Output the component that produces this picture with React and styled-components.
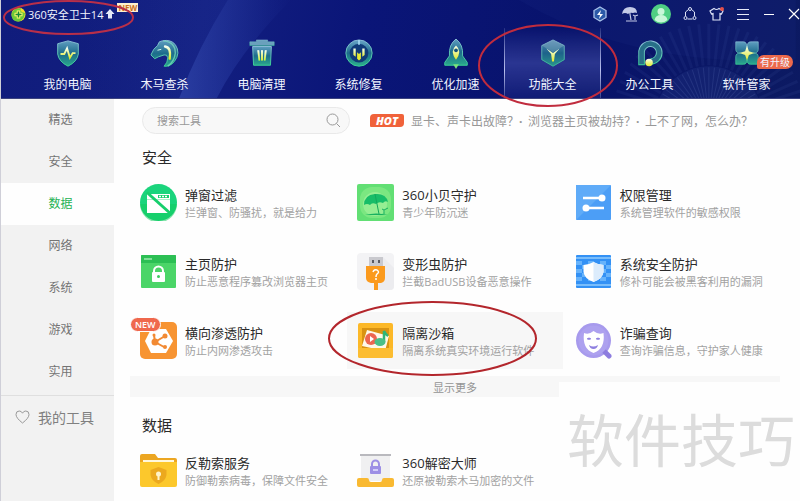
import React from "react";
import styled, { createGlobalStyle, css } from "styled-components";

const GlobalStyle = createGlobalStyle`
  * {
    box-sizing: border-box;
  }
  body {
    margin: 0;
    background: #fefefe;
    font-family: "Open Sans", "Noto Sans CJK SC", sans-serif;
    font-size: 12px;
  }
  button {
    padding: 0;
    border: none;
    background: none;
    font: inherit;
    color: inherit;
    cursor: pointer;
  }
  a {
    color: inherit;
    text-decoration: none;
  }
  svg {
    display: block;
  }
`;

const Page = styled.div`
  position: relative;
  display: flex;
  flex-direction: column;
  min-height: 100vh;
  border-left: 1px solid #cfcfd8;
  overflow: hidden;
`;

const Header = styled.header`
  position: relative;
  background: linear-gradient(100deg, #101c7c 0%, #131f80 25%, #0a1578 45%, #08136c 70%, #0c1a62 100%);
  color: #f2f5ff;
  border-bottom: 1px solid #3c437f;
`;

const Backdrop = styled.svg`
  position: absolute;
  top: 0;
  right: 0;
  height: 100%;
`;

const TitleBar = styled.div`
  position: relative;
  display: flex;
  align-items: center;
  justify-content: space-between;
  height: 28px;
  padding-left: 10px;
`;

const Brand = styled.div`
  display: flex;
  align-items: center;
  gap: 2px;
  height: 28px;
  font-size: 11px;
`;

const BrandTag = styled.span`
  align-self: flex-start;
  margin-top: 3px;
  padding: 0 1px;
  background: #fdf1cf;
  color: #c9701f;
  font-size: 8px;
  font-weight: 700;
  line-height: 9px;
`;

const WindowTools = styled.div`
  display: flex;
  align-items: center;
  gap: 12px;
`;

const Nav = styled.nav`
  position: relative;
  display: flex;
  padding: 0 5px 0 18px;
`;

const Tab = styled.button`
  position: relative;
  flex: 1;
  display: flex;
  flex-direction: column;
  align-items: center;
  gap: 6px;
  height: 70px;
  padding-top: 10px;
  line-height: 18px;
  white-space: nowrap;
  border: 1px solid transparent;
  border-width: 0 1px;
  ${props =>
    props.$active &&
    css`
      background: linear-gradient(rgba(150, 160, 255, 0), rgba(150, 160, 255, 0.24) 50%, rgba(150, 160, 255, 0.06));
      border-image: linear-gradient(rgba(255, 255, 255, 0.1), #b9c0ee 60%, rgba(255, 255, 255, 0.15)) 1;
      border-width: 0 1px;
    `}
`;

const TabBadge = styled.span`
  position: absolute;
  top: 27px;
  right: 1px;
  padding: 0 3px;
  border-radius: 7px 7px 7px 2px;
  background: #ec694c;
  font-size: 10px;
  line-height: 14px;
`;

const Body = styled.div`
  flex: 1;
  display: flex;
`;

const Sidebar = styled.aside`
  flex: 0 0 113px;
  background: #f2f2f2;
  color: #666;
`;

const Category = styled.button`
  display: block;
  width: 100%;
  height: 42px;
  padding: 0 8px 2px 14px;
  background: ${props => (props.$active ? "#fefefe" : "transparent")};
  color: ${props => (props.$active ? "#1fb254" : "#747474")};
`;

const MyTools = styled.button`
  display: flex;
  align-items: center;
  gap: 8px;
  width: 100%;
  height: 42px;
  margin-top: 2px;
  padding-left: 14px;
  border-top: 1px solid #dfdfdf;
  font-size: 14px;
  color: #808080;
`;

const Main = styled.main`
  flex: 1;
  min-width: 0;
  padding: 8px 20px 0 16px;
`;

const Toolbar = styled.div`
  display: flex;
  align-items: center;
  padding-left: 12px;
`;

const Search = styled.label`
  display: flex;
  align-items: center;
  flex: 0 0 208px;
  height: 27px;
  padding: 0 8px 0 14px;
  border: 1px solid #e9e9e9;
  border-radius: 14px;
  background: #f8f8f8;
`;

const SearchInput = styled.input`
  flex: 1;
  min-width: 0;
  padding: 0;
  border: none;
  outline: none;
  background: none;
  font-family: inherit;
  font-size: 11px;
  &::placeholder {
    color: #999;
    opacity: 1;
  }
`;

const Hot = styled.span`
  width: 34px;
  margin: 0 7px 0 20px;
  border-radius: 4px 2px 4px 1px;
  background: #f0623a;
  color: #fff;
  font-size: 11px;
  font-style: italic;
  font-weight: 800;
  line-height: 13px;
  text-align: center;
`;

const HotLink = styled.a`
  color: #979797;
  white-space: nowrap;
  & + &::before {
    content: "·";
    display: inline-block;
    width: 9px;
    font-weight: 700;
  }
`;

const Heading = styled.h2`
  margin: ${props => (props.$spaced ? "18px" : "13px")} 0 7px 12px;
  font-size: 15px;
  font-weight: 400;
  line-height: 20px;
  color: #2a2a2a;
`;

const ToolGrid = styled.div`
  display: grid;
  grid-template-columns: repeat(3, 1fr);
  gap: 12px 2px;
`;

const ToolButton = styled.button`
  display: flex;
  align-items: center;
  gap: 8px;
  min-width: 0;
  height: 57px;
  padding-left: 10px;
  text-align: left;
  background: ${props => (props.$hovered ? "#f7f7f7" : "transparent")};
`;

const ToolIcon = styled.span`
  position: relative;
  flex: 0 0 37px;
`;

const NewBadge = styled.span`
  position: absolute;
  top: -5px;
  left: -10px;
  padding: 0 4px;
  border: 1px solid #fff;
  border-radius: 8px;
  background: #ef684d;
  color: #fff;
  font-size: 9px;
  font-weight: 600;
  line-height: 13px;
`;

const ToolText = styled.span`
  padding-top: 2px;
  line-height: 18px;
  white-space: nowrap;
`;

const ToolName = styled.span`
  display: block;
  font-size: 13px;
  color: #2a2a2a;
`;

const ToolDesc = styled.span`
  display: block;
  font-size: 11px;
  color: #a2a2a2;
`;

const More = styled.button`
  display: block;
  width: 100%;
  height: 21px;
  margin-top: 7px;
  background: #f7f7f7;
  font-size: 11px;
  color: #949494;
`;

const Watermark = styled.div`
  position: absolute;
  top: 382px;
  right: 0;
  padding: 30px 5px 20px 8px;
  background: #fefefe;
  color: #dcdcdc;
  font-size: 57px;
  line-height: 57px;
  pointer-events: none;
`;

const Ring = styled.svg`
  position: absolute;
  top: ${props => props.$top}px;
  left: ${props => props.$left}px;
  fill: none;
  stroke: ${props => props.$color};
  stroke-width: 2;
  pointer-events: none;
`;

const Circled = ({ left, top, width, height, color = "#b3262c" }) => (
  <Ring $left={left} $top={top} $color={color} width={width} height={height} aria-hidden="true">
    <ellipse cx={width / 2} cy={height / 2} rx={width / 2 - 1} ry={height / 2 - 1} />
  </Ring>
);

// diagonal sheen and the fan in the right corner
const fanAngles = Array.from({ length: 31 }, (_, i) => -180 + i * 6);

const HeaderArt = () => (
  <Backdrop width="800" height="99" viewBox="0 0 800 99" aria-hidden="true">
    <defs>
      <linearGradient id="sheen" x1="0" x2="1">
        <stop offset="0" stopColor="#3a58c8" stopOpacity="0" />
        <stop offset="1" stopColor="#3a58c8" stopOpacity="0.12" />
      </linearGradient>
      <linearGradient id="ray" x1="0" x2="1">
        <stop offset="0" stopColor="#4a68d0" stopOpacity="0.4" />
        <stop offset="1" stopColor="#3a58c8" stopOpacity="0" />
      </linearGradient>
    </defs>
    <path d="M80 0H226Q196 48 177 99H80z" fill="url(#sheen)" />
    <path d="M226 0H290Q240 50 215 99H177Q196 48 226 0z" fill="url(#ray)" />
    <path d="M520 0H800V60Q640 70 520 0z" fill="#1b2f86" opacity="0.18" />
    <g fill="none" stroke="#5069b8" opacity="0.1">
      {fanAngles.map(a => (
        <path key={a} d="M56 0H98" strokeWidth="3" transform={`translate(712 122) rotate(${a})`} />
      ))}
    </g>
    <circle cx="712" cy="122" r="55" fill="#4a62b2" opacity="0.14" />
    <g fill="none" stroke="#7a90d4" opacity="0.16">
      {fanAngles.map(a => (
        <path key={a} d="M20 0H54" strokeWidth="1" transform={`translate(712 122) rotate(${a})`} />
      ))}
    </g>
  </Backdrop>
);

const NavDefs = () => (
  <Backdrop width="0" aria-hidden="true">
    <defs>
      <linearGradient id="glass" x1="0" y1="0" x2="0" y2="1">
        <stop offset="0" stopColor="#5f9dc0" />
        <stop offset="0.5" stopColor="#1d6c8c" />
        <stop offset="1" stopColor="#2aa88c" />
      </linearGradient>
      <linearGradient id="edge" x1="0" y1="0" x2="0" y2="1">
        <stop offset="0" stopColor="#8cc0d8" />
        <stop offset="1" stopColor="#38d494" />
      </linearGradient>
      <linearGradient id="glow" x1="0" y1="0" x2="0" y2="1">
        <stop offset="0" stopColor="#f4fff0" />
        <stop offset="1" stopColor="#e2ea2c" />
      </linearGradient>
    </defs>
  </Backdrop>
);

const navIcons = {
  computer: (
    <>
      <path d="M16 3 27 6V17Q26 25 16 30 6 25 5 17V6z" fill="url(#glass)" stroke="url(#edge)" />
      <path d="M8 17h4l3-6 3 10 3-5h3" fill="none" stroke="url(#glow)" strokeWidth="2" />
    </>
  ),
  horse: (
    <>
      <path
        d="M13 3Q22 1 27 7q6 9-1 18-5 6-11 5 4-4 4-9-1-4-4-3l-6 2-4 2-4-4 3-6 4-4 2-4z"
        fill="url(#glass)"
        stroke="url(#edge)"
      />
      <path d="M14 3q13 1 13 13-1 9-8 14" fill="none" stroke="#7fe3c0" strokeWidth="1.500" opacity="0.7" />
      <path d="M16 9q7 1 5 13" fill="none" stroke="url(#glow)" strokeWidth="2.500" strokeLinecap="round" />
      <path d="M8 13l4-1" stroke="#d8fff0" />
    </>
  ),
  clean: (
    <>
      <path d="M3 4h7V2h12v2h7v4H3z" fill="#6aa0bd" stroke="url(#edge)" strokeWidth="0.5" />
      <path d="M6 9h20l-1 20H7z" fill="url(#glass)" stroke="url(#edge)" />
      <path d="M12 13l1 11M16 13v11M20 13l-1 11" stroke="url(#edge)" strokeWidth="2" />
      <path d="M11 13h2l1 11h-1.500zM15 13h2v11h-2zM19 13h2l-1.500 11H18z" fill="url(#glow)" />
    </>
  ),
  repair: (
    <>
      <circle cx="16" cy="16" r="12" fill="#103b78" stroke="url(#glass)" strokeWidth="4" />
      <circle cx="16" cy="16" r="14" fill="none" stroke="url(#edge)" />
      <path d="M16 2v5" stroke="#9dd2ec" strokeWidth="2" />
      <path d="M10 11h2.500v9L10 18zM19.500 11H22v7l-2.500 2z" fill="url(#glow)" />
      <path d="M14 15l2 2 2-2v7l-2 2-2-2z" fill="#e6ec34" />
    </>
  ),
  rocket: (
    <>
      <path d="M16 1Q24 7 23 19l5 7v3H4v-3l5-7Q8 7 16 1z" fill="url(#glass)" stroke="url(#edge)" />
      <path d="M16 8q7 6 0 15-7-9 0-15z" fill="url(#glow)" />
      <circle cx="16" cy="13" r="2" fill="#14527a" />
      <path d="M13 28h6l-3 5z" fill="#7be27a" />
    </>
  ),
  cube: (
    <>
      <path d="M16 2 28 8V23L16 30 4 23V8z" fill="url(#glass)" stroke="url(#edge)" opacity="0.85" />
      <path d="M16 2 28 8 16 15 4 8z" fill="#9dbccc" opacity="0.35" />
      <path d="M9 11l7 5 7-5-5 6-1 8h-2l-1-8z" fill="url(#glow)" />
    </>
  ),
  office: (
    <>
      <path d="M7 29V14a9.500 9.500 0 1 1 9.500 11" fill="none" stroke="url(#edge)" strokeWidth="7" />
      <path d="M7 28V14a9.500 9.500 0 1 1 9.500 11" fill="none" stroke="#286f88" strokeWidth="5" />
      <circle cx="15" cy="26" r="4" fill="url(#glow)" />
    </>
  ),
  manager: (
    <>
      <path
        d="M4 4h8q4 0 4 6 0-6 4-6h8v8q0 4-5 4 5 0 5 4v8h-8q-4 0-4-5 0 5-4 5H4v-8q0-4 5-4-5 0-5-4z"
        fill="url(#glass)"
        stroke="url(#edge)"
        strokeWidth="0.7"
      />
      <path d="M16 8l2 6 6 2-6 2-2 6-2-6-6-2 6-2z" fill="url(#glow)" />
    </>
  )
};

const tabs = [
  { id: "computer", label: "我的电脑" },
  { id: "horse", label: "木马查杀" },
  { id: "clean", label: "电脑清理" },
  { id: "repair", label: "系统修复" },
  { id: "rocket", label: "优化加速" },
  { id: "cube", label: "功能大全" },
  { id: "office", label: "办公工具" },
  { id: "manager", label: "软件管家", badge: "有升级" }
];

const toolIcons = {
  popup: (
    <>
      <circle cx="18.5" cy="18.5" r="18.5" fill="#1ad47c" />
      <path d="M0 20a18.500 18.500 0 0 0 37 0z" fill="#12ca5c" opacity="0.5" />
      <path d="M7 10h23v19H7z" fill="#fff" />
      <path d="M18 11h11v3H18z" fill="#17cf6c" />
      <path d="M19 12.500h9" stroke="#fff" strokeWidth="1.500" strokeDasharray="2 1" />
      <path d="M7 15.500h23" stroke="#a9efc8" />
      <path d="M7 8.500L31 30" stroke="#17cf6c" strokeWidth="3" />
    </>
  ),
  umbrella: (
    <>
      <rect width="37" height="37" rx="2" fill="#62df74" />
      <rect x="3" y="3" width="31" height="31" rx="12" fill="#86ea88" opacity="0.7" />
      <circle cx="18" cy="20" r="12" fill="#a8f4a0" opacity="0.6" />
      <path d="M7 21Q7 11 18 10q11-1 13 8-3-2-5 1-4-2-7 1-4-2-6 1-3-2-6 0z" fill="#18bd68" />
      <path d="M18 10l4 20" stroke="#13a85b" />
      <path d="M8 31q11-3 23 0z" fill="#18b160" />
      <path d="M27 30v-4l-2-1m2 1 4-2" fill="none" stroke="#18b160" />
    </>
  ),
  sliders: (
    <>
      <rect x="1" y="1" width="35" height="35" rx="1" fill="#4c9ef6" />
      <path d="M1 1h35L1 36z" fill="#5fabf8" />
      <path d="M8 14h18M12 24h17" stroke="#fff" strokeWidth="2.500" />
      <circle cx="27" cy="14" r="3.500" fill="#fff" />
      <circle cx="11" cy="24" r="3.500" fill="#fff" />
    </>
  ),
  homepage: (
    <>
      <rect x="1" y="2" width="35" height="33" rx="1" fill="#4bd568" />
      <path d="M1 3q0-1 1-1h33q1 0 1 1v7H1z" fill="#2cbf54" />
      <path d="M4 6h8" stroke="#d4ffdc" />
      <path d="M14 19v-1a4.500 4.500 0 0 1 9 0v3" fill="none" stroke="#fff" strokeWidth="2" />
      <rect x="12" y="19" width="13" height="10" rx="1" fill="#fff" />
      <circle cx="18.500" cy="23.500" r="1.500" fill="#3cca5e" />
    </>
  ),
  usb: (
    <>
      <rect width="37" height="37" rx="4" fill="#f3f3f5" />
      <path d="M26 4l11 11v18q0 4-4 4H20z" fill="#ececef" />
      <path d="M12 4h14v10H12z" fill="#c9c9ce" />
      <path d="M15 7h2v3h-2zM21 7h2v3h-2z" fill="#5a5a62" />
      <path d="M9 13h19v12q0 4-4 5h-3v7h-4v-7h-3q-5-1-5-5z" fill="#fb9a1d" />
      <path d="M16 19q1-3 4-2 3 2 0 4-1 1-1 3M18 26h2" fill="none" stroke="#fff" strokeWidth="1.500" />
    </>
  ),
  guard: (
    <>
      <rect x="1" y="2" width="35" height="33" rx="1" fill="#3391f5" />
      <path d="M1 5h35M1 32h35" stroke="#79bdfb" strokeWidth="2" />
      <path
        d="M1 10h35M7 14h29M1 18h35M7 22h29M1 26h35"
        stroke="#67b3fb"
        strokeWidth="4"
        strokeDasharray="6 6"
      />
      <path d="M18.500 9q5 3 10 3v7q-1 7-10 10-9-3-10-10v-7q5 0 10-3z" fill="#fff" />
      <path d="M18.500 9q5 3 10 3v7q-1 7-10 10z" fill="#dcecfc" />
    </>
  ),
  lateral: (
    <>
      <rect width="37" height="37" rx="5" fill="#f79432" />
      <path d="M11 7h15l7 12-7 12H11L5 19z" fill="#fff" />
      <path d="M15 20l10-6M15 20l9 5M15 20l-1-7" stroke="#f28a33" strokeWidth="2" />
      <circle cx="15" cy="20" r="3.500" fill="#f28a33" />
      <circle cx="25" cy="14" r="2.500" fill="#f28a33" />
      <circle cx="25" cy="25" r="2" fill="#f28a33" />
      <circle cx="14" cy="13" r="1.500" fill="#f28a33" />
    </>
  ),
  sandbox: (
    <>
      <rect x="1" y="1" width="35" height="35" rx="2" fill="#fcb827" />
      <path d="M5 6h27v20H5z" fill="#d99312" />
      <path d="M10 8l22 6-4 15-23-5z" fill="#fff8e8" />
      <circle cx="14" cy="17" r="6" fill="#ed6650" />
      <path d="M13 14l4 3-4 3z" fill="#fff" />
      <path d="M27 20V9q2 4 4 5" fill="none" stroke="#2fb578" strokeWidth="2.500" />
      <ellipse cx="23" cy="20" rx="5.500" ry="4" fill="#4bbf87" />
      <path d="M1 26h35v8q0 2-2 2H3q-2 0-2-2z" fill="#fcbd31" />
    </>
  ),
  fraud: (
    <>
      <circle cx="18.500" cy="18.500" r="17.500" fill="#a79aed" />
      <path d="M30 30l4 4" stroke="#8d7cdf" strokeWidth="5" strokeLinecap="round" />
      <circle cx="18.500" cy="18.500" r="15" fill="#ada1ef" />
      <path d="M9 11q5 2 9.500-2 5 4 10 2 2 16-10 20Q7 27 9 11z" fill="#fff" />
      <path d="M12 17q2-2 4 0l-2 1zM21 17q2-2 4 0l-2 1zM14 23q4 3 9 0-1 4-4.500 4T14 23z" fill="#8e7fe0" />
      <path d="M12 17q2-2 4 0M21 17q2-2 4 0" fill="none" stroke="#8e7fe0" />
    </>
  ),
  folder: (
    <>
      <path d="M0 4q0-2 2-2h13l3 4h17q2 0 2 2v8H0z" fill="#eca622" />
      <path d="M3 8h31v4H3z" fill="#fff8dc" />
      <path d="M0 10h37v23q0 2-2 2H2q-2 0-2-2z" fill="#fcc82c" />
      <path d="M18.500 15l8 3v5q-1 6-8 9-7-3-8-9v-5z" fill="#eca91e" />
      <circle cx="18.500" cy="22" r="2.500" fill="#fff3c8" />
      <path d="M18.500 22v6" stroke="#fff3c8" strokeWidth="2" />
    </>
  ),
  decrypt: (
    <>
      <path d="M4 2h29v27H4z" fill="#f0f0f1" />
      <path d="M3 2h31v2H3z" fill="#b9b9be" />
      <path d="M15 15v-3a3.500 3.500 0 0 1 7 0v4" fill="none" stroke="#9d8fe5" strokeWidth="2" />
      <rect x="13" y="14" width="11" height="8" rx="1" fill="#9d8fe5" />
      <path d="M16 18h5" stroke="#e5e0ff" strokeWidth="1.500" />
      <path d="M2 26h8q2 0 2 2 0 2 2 2h9q2 0 2-2 0-2 2-2h8q2 0 2 2v5q0 2-2 2H2q-2 0-2-2v-5q0-2 2-2z" fill="#f9b931" />
    </>
  )
};

const safetyTools = [
  { id: "popup", name: "弹窗过滤", desc: "拦弹窗、防骚扰，就是给力" },
  { id: "umbrella", name: "360小贝守护", desc: "青少年防沉迷" },
  { id: "sliders", name: "权限管理", desc: "系统管理软件的敏感权限" },
  { id: "homepage", name: "主页防护", desc: "防止恶意程序篡改浏览器主页" },
  { id: "usb", name: "变形虫防护", desc: "拦截BadUSB设备恶意操作" },
  { id: "guard", name: "系统安全防护", desc: "修补可能会被黑客利用的漏洞" },
  { id: "lateral", name: "横向渗透防护", desc: "防止内网渗透攻击", isNew: true },
  { id: "sandbox", name: "隔离沙箱", desc: "隔离系统真实环境运行软件", hovered: true },
  { id: "fraud", name: "诈骗查询", desc: "查询诈骗信息，守护家人健康" }
];

const dataTools = [
  { id: "folder", name: "反勒索服务", desc: "防御勒索病毒，保障文件安全" },
  { id: "decrypt", name: "360解密大师", desc: "还原被勒索木马加密的文件" }
];

const categories = ["精选", "安全", "数据", "网络", "系统", "游戏", "实用"];

const hotLinks = ["显卡、声卡出故障？", "浏览器主页被劫持？", "上不了网，怎么办？"];

const Tools = ({ items }) => (
  <ToolGrid>
    {items.map(tool => (
      <ToolButton key={tool.id} $hovered={tool.hovered}>
        <ToolIcon>
          <svg width="37" height="37" viewBox="0 0 37 37" aria-hidden="true">
            {toolIcons[tool.id]}
          </svg>
          {tool.isNew && <NewBadge>NEW</NewBadge>}
        </ToolIcon>
        <ToolText>
          <ToolName>{tool.name}</ToolName>
          <ToolDesc>{tool.desc}</ToolDesc>
        </ToolText>
      </ToolButton>
    ))}
  </ToolGrid>
);

const WindowButtons = () => (
  <WindowTools>
    <button aria-label="加速">
      <svg width="18" height="18" viewBox="0 0 18 18">
        <path d="M9 2l6 3.500v7L9 16l-6-3.500v-7z" fill="#2c5aa8" stroke="#a9c2ea" strokeWidth="1.300" />
        <path d="M10 5L6 10h3l-1 4 4-5H9z" fill="#fff" />
      </svg>
    </button>
    <button aria-label="守护">
      <svg width="18" height="18" viewBox="0 0 18 18">
        <path d="M1 9Q2 2 9 2t7 6q-2-1-4 0-3-1-5 1-3-2-6 0z" fill="#c3cae6" />
        <path d="M8 3l2 12M5 16h11M14 15v-4l-2-1m2 1 3-1" fill="none" stroke="#c3cae6" strokeWidth="1.200" />
      </svg>
    </button>
    <button aria-label="账号">
      <svg width="20" height="20" viewBox="0 0 20 20">
        <circle cx="10" cy="10" r="10" fill="#4fcf83" />
        <circle cx="10" cy="7.500" r="3.500" fill="#c9f7d8" />
        <path d="M3.500 16q1-5 6.500-5t6.500 5Q10 21 3.500 16z" fill="#c9f7d8" />
      </svg>
    </button>
    <button aria-label="分享">
      <svg width="14" height="14" viewBox="0 0 14 14" fill="none" stroke="#dde3f7">
        <path d="M5.500 2.500 2.500 5v4M8.500 2.500l3 2.500v4M9.500 12h-5" />
        <circle cx="7" cy="2" r="1.500" />
        <circle cx="2.500" cy="11" r="1.500" />
        <circle cx="11.500" cy="11" r="1.500" />
      </svg>
    </button>
    <button aria-label="皮肤">
      <svg width="15" height="14" viewBox="0 0 15 14">
        <path
          d="M5 1.500q2.500 2 5 0L14 4l-1.500 3-1.500-.5V13H4V6.500L2.500 7 1 4z"
          fill="none"
          stroke="#dde3f7"
          strokeWidth="1.200"
        />
        <circle cx="13" cy="2" r="2" fill="#e5504a" />
      </svg>
    </button>
    <button aria-label="菜单">
      <svg width="14" height="14" viewBox="0 0 14 14">
        <path d="M1 2.500h12M1 7.500h12M1 12.500h12" stroke="#e6eaf8" />
      </svg>
    </button>
    <button aria-label="最小化">
      <svg width="14" height="14" viewBox="0 0 14 14">
        <path d="M2 7.500h10" stroke="#fff" />
      </svg>
    </button>
    <button aria-label="关闭">
      <svg width="12" height="12" viewBox="0 0 12 12">
        <path d="M1 1l10 10M11 1L1 11" stroke="#fff" strokeWidth="1.200" />
      </svg>
    </button>
  </WindowTools>
);

const App = () => (
  <>
    <GlobalStyle />
    <Page>
      <Header>
        <HeaderArt />
        <NavDefs />
        <TitleBar>
          <Brand>
            <svg width="15" height="15" viewBox="0 0 15 15" aria-hidden="true">
              <circle cx="7.500" cy="7.500" r="7" fill="#f4dc28" />
              <path d="M.5 8Q1 1 10 1q-2 4 4 5-1 8.500-7.500 8.500Q1 14 .5 8z" fill="#6cc93a" />
              <path d="M7.500 3.500v8M3.500 7.500h8" stroke="#fff86b" strokeWidth="3.500" />
              <path d="M7.500 4.500v6M4.500 7.500h6" stroke="#16883a" strokeWidth="1.500" />
            </svg>
            360安全卫士14
            <svg width="10" height="12" viewBox="0 0 10 12" aria-hidden="true">
              <path d="M5 1l4.500 5H7v4.500H3V6H.5z" fill="#e4e8f8" />
            </svg>
            <BrandTag>NEW</BrandTag>
          </Brand>
          <WindowButtons />
        </TitleBar>
        <Nav>
          {tabs.map(tab => (
            <Tab key={tab.id} $active={tab.id === "cube"}>
              <svg width="30" height="32" viewBox="0 0 32 34" aria-hidden="true">
                {navIcons[tab.id]}
              </svg>
              {tab.label}
              {tab.badge && <TabBadge>{tab.badge}</TabBadge>}
            </Tab>
          ))}
        </Nav>
      </Header>
      <Body>
        <Sidebar>
          {categories.map(name => (
            <Category key={name} $active={name === "数据"}>
              {name}
            </Category>
          ))}
          <MyTools>
            <svg width="15" height="14" viewBox="0 0 15 14" aria-hidden="true">
              <path
                d="M7.500 13Q1 8 1 4.500 1 1 4.200 1 6.500 1 7.500 3.200 8.500 1 10.800 1 14 1 14 4.500 14 8 7.500 13z"
                fill="none"
                stroke="#999"
              />
            </svg>
            我的工具
          </MyTools>
        </Sidebar>
        <Main>
          <Toolbar>
            <Search>
              <SearchInput type="text" placeholder="搜索工具" aria-label="搜索工具" />
              <svg width="15" height="15" viewBox="0 0 15 15" fill="none" stroke="#999" aria-hidden="true">
                <circle cx="6.500" cy="6.500" r="5.500" />
                <path d="M10.500 10.500l3.500 3.500" />
              </svg>
            </Search>
            <Hot>HOT</Hot>
            {hotLinks.map(text => (
              <HotLink key={text} href="#">
                {text}
              </HotLink>
            ))}
          </Toolbar>
          <Heading>安全</Heading>
          <Tools items={safetyTools} />
          <More>显示更多</More>
          <Heading $spaced>数据</Heading>
          <Tools items={dataTools} />
        </Main>
      </Body>
      <Watermark>软件技巧</Watermark>
      <Circled left={2} top={0} width={131} height={35} color="#b82f49" />
      <Circled left={477} top={24} width={140} height={83} color="#c02c3e" />
      <Circled left={327} top={301} width={209} height={75} />
    </Page>
  </>
);

export default App;
